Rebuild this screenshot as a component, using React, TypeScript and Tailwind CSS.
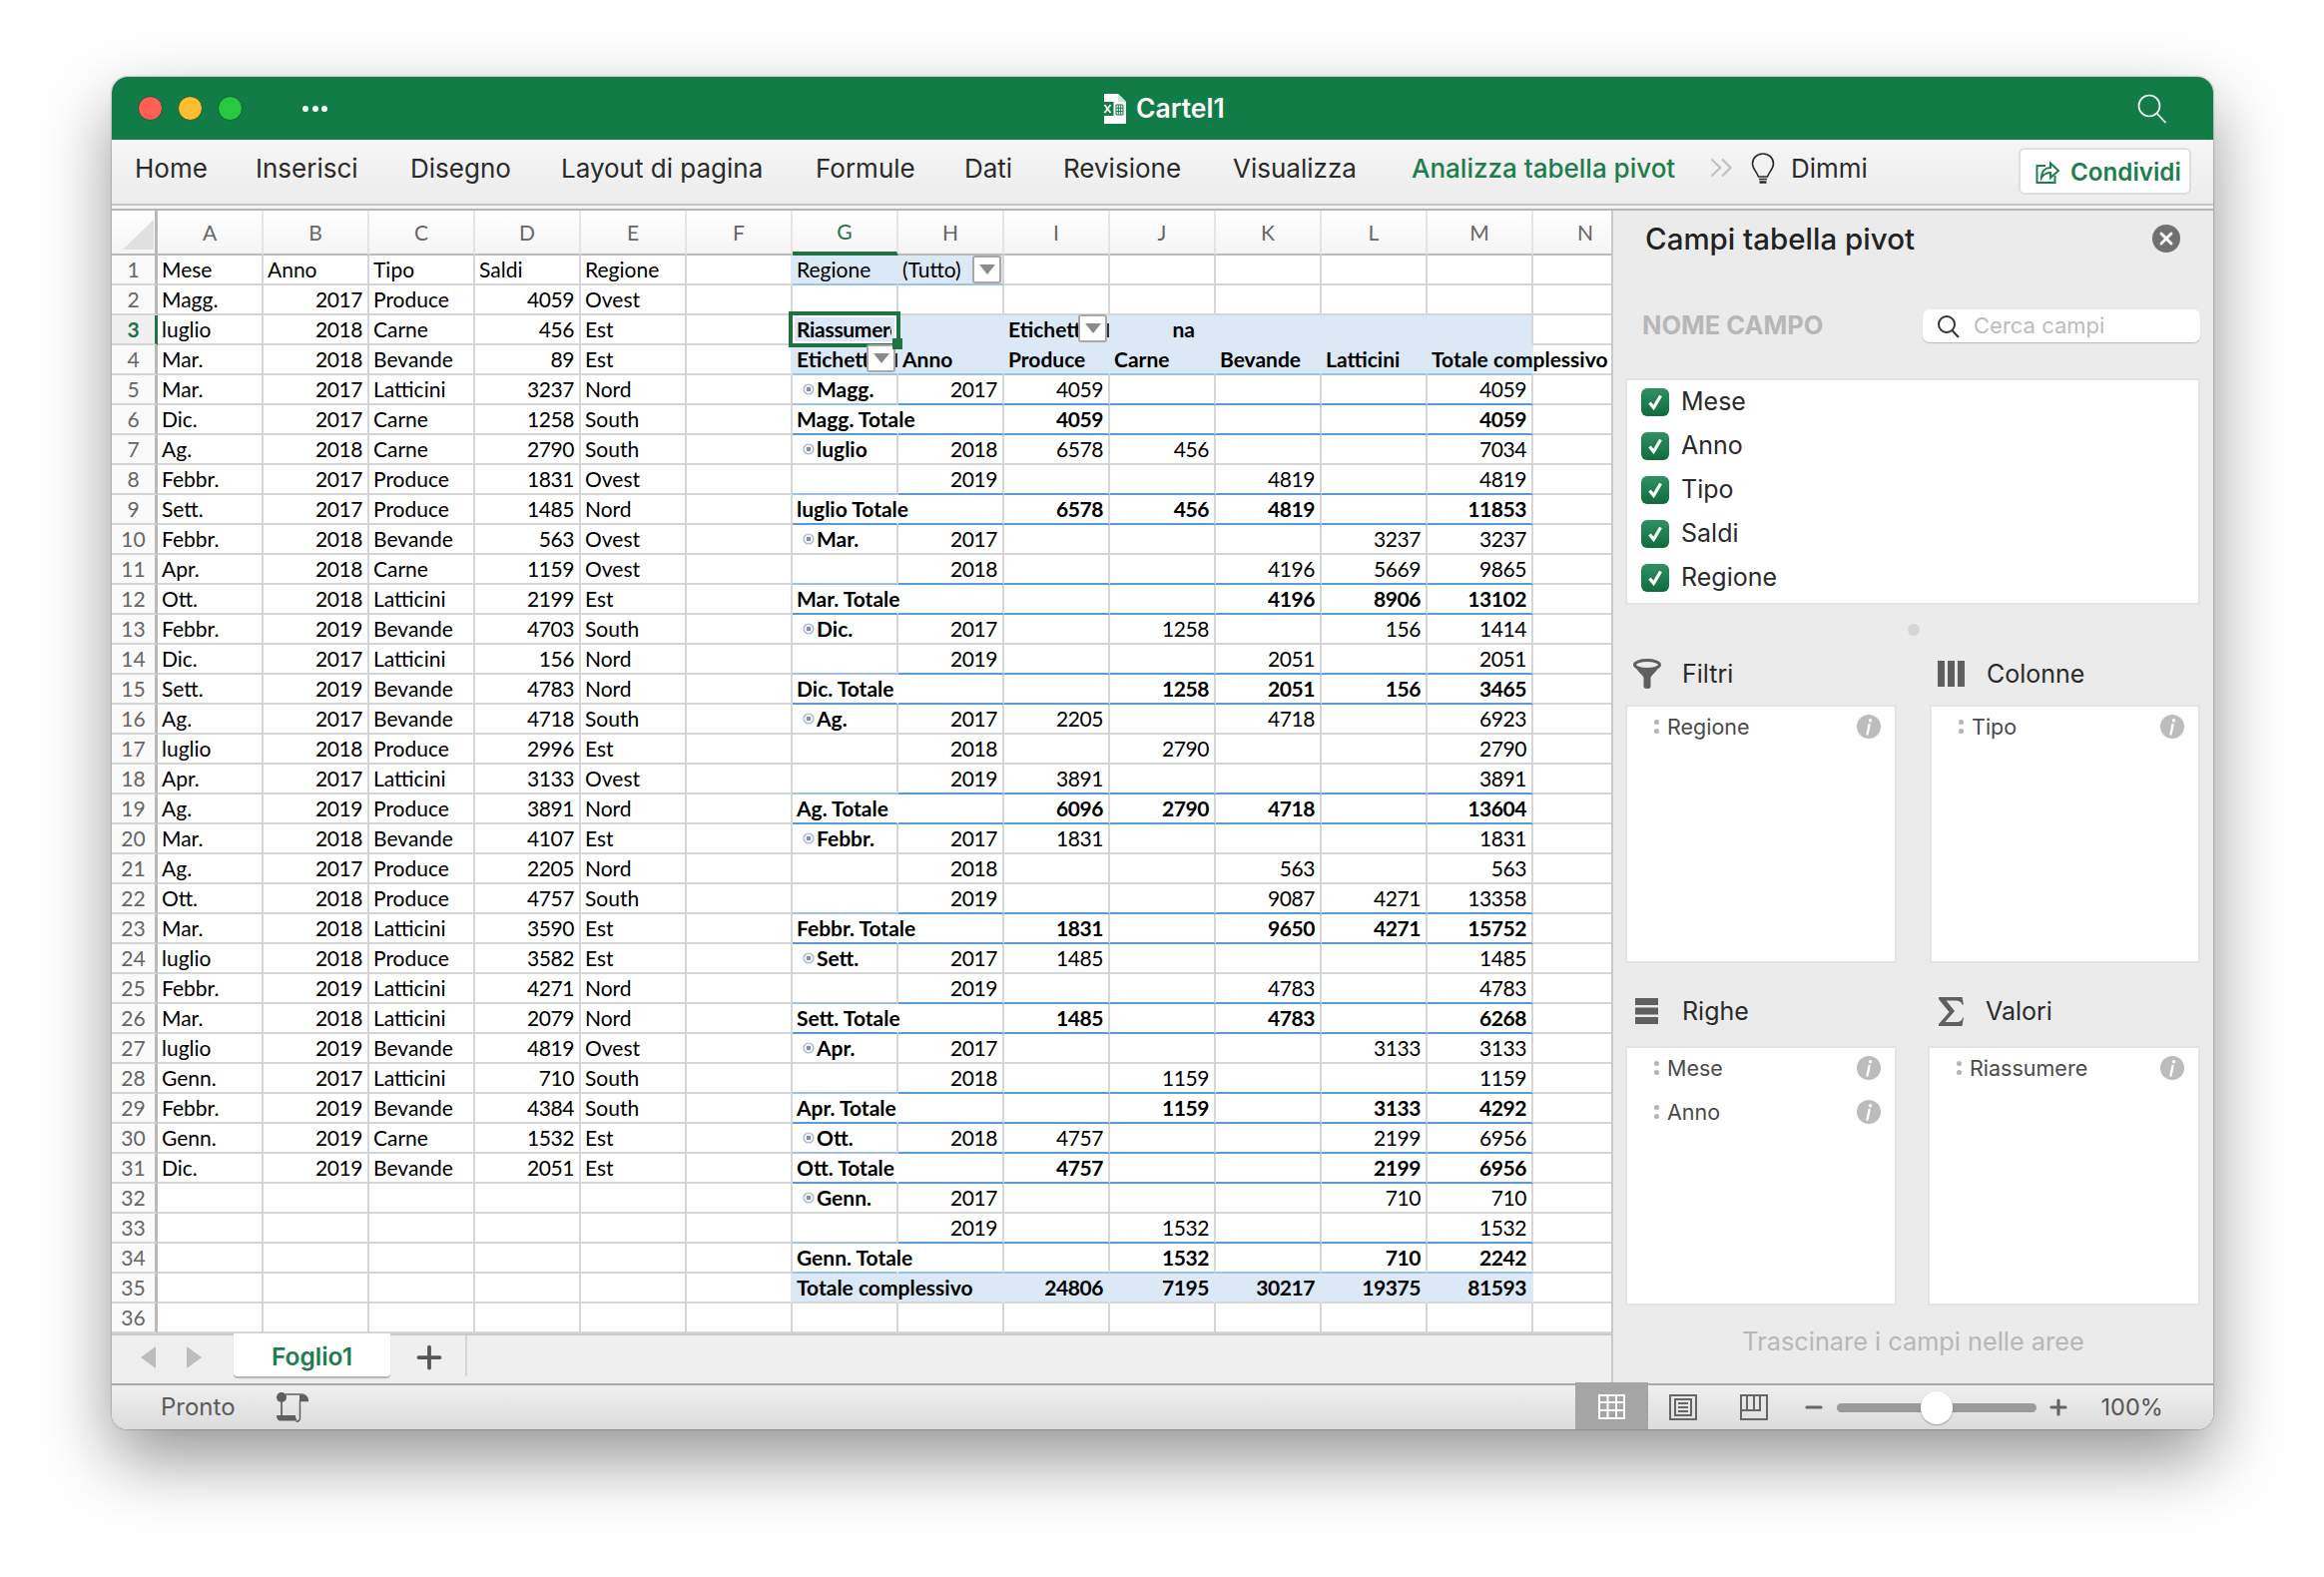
// Excel for Mac window with a pivot table and the pivot field panel.
import { Plus, Minus, X } from 'lucide-react'

const COL_LETTERS = ['A', 'B', 'C', 'D', 'E', 'F', 'G', 'H', 'I', 'J', 'K', 'L', 'M', 'N']

const SHEET: [string, number, string, number, string][] = [
  ['Magg.', 2017, 'Produce', 4059, 'Ovest'],
  ['luglio', 2018, 'Carne', 456, 'Est'],
  ['Mar.', 2018, 'Bevande', 89, 'Est'],
  ['Mar.', 2017, 'Latticini', 3237, 'Nord'],
  ['Dic.', 2017, 'Carne', 1258, 'South'],
  ['Ag.', 2018, 'Carne', 2790, 'South'],
  ['Febbr.', 2017, 'Produce', 1831, 'Ovest'],
  ['Sett.', 2017, 'Produce', 1485, 'Nord'],
  ['Febbr.', 2018, 'Bevande', 563, 'Ovest'],
  ['Apr.', 2018, 'Carne', 1159, 'Ovest'],
  ['Ott.', 2018, 'Latticini', 2199, 'Est'],
  ['Febbr.', 2019, 'Bevande', 4703, 'South'],
  ['Dic.', 2017, 'Latticini', 156, 'Nord'],
  ['Sett.', 2019, 'Bevande', 4783, 'Nord'],
  ['Ag.', 2017, 'Bevande', 4718, 'South'],
  ['luglio', 2018, 'Produce', 2996, 'Est'],
  ['Apr.', 2017, 'Latticini', 3133, 'Ovest'],
  ['Ag.', 2019, 'Produce', 3891, 'Nord'],
  ['Mar.', 2018, 'Bevande', 4107, 'Est'],
  ['Ag.', 2017, 'Produce', 2205, 'Nord'],
  ['Ott.', 2018, 'Produce', 4757, 'South'],
  ['Mar.', 2018, 'Latticini', 3590, 'Est'],
  ['luglio', 2018, 'Produce', 3582, 'Est'],
  ['Febbr.', 2019, 'Latticini', 4271, 'Nord'],
  ['Mar.', 2018, 'Latticini', 2079, 'Nord'],
  ['luglio', 2019, 'Bevande', 4819, 'Ovest'],
  ['Genn.', 2017, 'Latticini', 710, 'South'],
  ['Febbr.', 2019, 'Bevande', 4384, 'South'],
  ['Genn.', 2019, 'Carne', 1532, 'Est'],
  ['Dic.', 2019, 'Bevande', 2051, 'Est'],
]

// Pivot rows 5..35: label, year, Produce, Carne, Bevande, Latticini, total
type PivotRow = [string, string, string, string, string, string, string]
const PIVOT: PivotRow[] = [
  ['Magg.', '2017', '4059', '', '', '', '4059'],
  ['Magg. Totale', '', '4059', '', '', '', '4059'],
  ['luglio', '2018', '6578', '456', '', '', '7034'],
  ['', '2019', '', '', '4819', '', '4819'],
  ['luglio Totale', '', '6578', '456', '4819', '', '11853'],
  ['Mar.', '2017', '', '', '', '3237', '3237'],
  ['', '2018', '', '', '4196', '5669', '9865'],
  ['Mar. Totale', '', '', '', '4196', '8906', '13102'],
  ['Dic.', '2017', '', '1258', '', '156', '1414'],
  ['', '2019', '', '', '2051', '', '2051'],
  ['Dic. Totale', '', '', '1258', '2051', '156', '3465'],
  ['Ag.', '2017', '2205', '', '4718', '', '6923'],
  ['', '2018', '', '2790', '', '', '2790'],
  ['', '2019', '3891', '', '', '', '3891'],
  ['Ag. Totale', '', '6096', '2790', '4718', '', '13604'],
  ['Febbr.', '2017', '1831', '', '', '', '1831'],
  ['', '2018', '', '', '563', '', '563'],
  ['', '2019', '', '', '9087', '4271', '13358'],
  ['Febbr. Totale', '', '1831', '', '9650', '4271', '15752'],
  ['Sett.', '2017', '1485', '', '', '', '1485'],
  ['', '2019', '', '', '4783', '', '4783'],
  ['Sett. Totale', '', '1485', '', '4783', '', '6268'],
  ['Apr.', '2017', '', '', '', '3133', '3133'],
  ['', '2018', '', '1159', '', '', '1159'],
  ['Apr. Totale', '', '', '1159', '', '3133', '4292'],
  ['Ott.', '2018', '4757', '', '', '2199', '6956'],
  ['Ott. Totale', '', '4757', '', '', '2199', '6956'],
  ['Genn.', '2017', '', '', '', '710', '710'],
  ['', '2019', '', '1532', '', '', '1532'],
  ['Genn. Totale', '', '', '1532', '', '710', '2242'],
  ['Totale complessivo', '', '24806', '7195', '30217', '19375', '81593'],
]

const isTotal = (s: string) => s.endsWith('Totale')

const cellBase =
  'relative flex h-full w-[106px] shrink-0 items-center whitespace-nowrap border-r-2 border-b-2 border-[#d6d6d6] pr-[5px] pl-[4px]'

function Cell({ children, right, className = '' }: { children?: React.ReactNode; right?: boolean; className?: string }) {
  return <div className={cellBase + (right ? ' justify-end tracking-[-0.45px] ' : ' ') + className}>{children}</div>
}

function DropBtn({ className = '' }: { className?: string }) {
  return (
    <div
      className={
        'absolute z-10 flex h-[28px] w-[29px] items-center justify-center rounded-[3px] border-2 border-[#a9a9a9] bg-white ' +
        className
      }
    >
      <div className="h-0 w-0 border-x-[8px] border-t-[10px] border-x-transparent border-t-[#8a8a8a]" />
    </div>
  )
}

function ExpandIcon() {
  return (
    <svg width="12" height="12" viewBox="0 0 12 12" className="mr-[2px] ml-[6px] shrink-0">
      <circle cx="6" cy="6" r="5" fill="#eef2f6" stroke="#a9b4c0" strokeWidth="1.2" />
      <rect x="4" y="4" width="4" height="4" fill="#7f8ea0" />
    </svg>
  )
}

function RowHead({ n }: { n: number }) {
  const active = n === 3
  return (
    <div
      className={
        'flex h-full w-[46px] shrink-0 items-center justify-center border-b-2 border-[#d6d6d6] text-[21px] ' +
        (active
          ? 'border-r-[3px] border-r-[#1f7246] bg-[#f0f0f0] font-bold text-[#1f7246]'
          : 'border-r-[3px] border-r-[#b9b9b9] bg-[#fafafa] text-[#666666]')
      }
    >
      {n}
    </div>
  )
}

function PivotCells({ row, r }: { row: number; r: PivotRow }) {
  const grand = row === 35
  const total = isTotal(r[0])
  const nextTotal = !total && !grand && isTotal(PIVOT[row - 4]?.[0] ?? '')
  const bold = total || grand ? ' font-bold' : ''
  const line = grand
    ? ' border-[#dbe8f6] border-b-[#d6d6d6] bg-[#dbe8f6]'
    : row === 34
      ? ' border-b-[#9cc2e5]'
      : total || nextTotal
        ? ' border-b-[#5b9bd5]'
        : ''
  const gLine = grand ? line : nextTotal ? ' border-b-[#9cc2e5]' : line
  const open = total || grand ? ' z-[1] border-r-transparent' : ''
  return (
    <>
      <Cell className={gLine + open + ' font-bold'}>
        {r[0] && !total && !grand && <ExpandIcon />}
        {r[0]}
      </Cell>
      {r.slice(1).map((v, i) => (
        <Cell key={i} right className={line + bold}>
          {v}
        </Cell>
      ))}
    </>
  )
}

function Blank({ count }: { count: number }) {
  return (
    <>
      {Array.from({ length: count }, (_, i) => (
        <Cell key={i} />
      ))}
    </>
  )
}

function SheetRow({ n }: { n: number }) {
  const src = n >= 2 && n <= 31 ? SHEET[n - 2] : null
  const pivotEdge = n === 1 || n === 3 || n === 4 || n === 35
  const head = 'border-r-[#dbe8f6] border-b-[#9cc2e5] bg-[#dbe8f6]'
  const band = 'border-transparent bg-[#dbe8f6]'
  return (
    <div className="flex h-[30px]">
      <RowHead n={n} />
      {n === 1 ? (
        <>
          <Cell>Mese</Cell>
          <Cell>Anno</Cell>
          <Cell>Tipo</Cell>
          <Cell>Saldi</Cell>
          <Cell>Regione</Cell>
        </>
      ) : src ? (
        <>
          <Cell>{src[0]}</Cell>
          <Cell right>{src[1]}</Cell>
          <Cell>{src[2]}</Cell>
          <Cell right>{src[3]}</Cell>
          <Cell>{src[4]}</Cell>
        </>
      ) : (
        <Blank count={5} />
      )}
      <Cell className={pivotEdge ? 'border-r-[#dbe8f6]' : ''} />
      {n === 1 && (
        <>
          <Cell className={head}>Regione</Cell>
          <Cell className="border-b-[#9cc2e5] bg-[#dbe8f6]">
            (Tutto)
            <DropBtn className="top-0 right-[1px]" />
          </Cell>
          <Blank count={5} />
        </>
      )}
      {n === 2 && <Blank count={7} />}
      {n === 3 && (
        <>
          <Cell className={band + ' font-bold'}>
            <span className="w-full overflow-hidden tracking-[-0.3px]">Riassumere</span>
            <div className="absolute -top-[4px] -right-[4px] -bottom-[4px] -left-[4px] z-10 border-[4px] border-[#1f7246] shadow-[inset_0_0_0_2px_#ffffff]" />
            <div className="absolute top-[23px] left-[100px] z-20 h-[11px] w-[10px] bg-[#1f7246]" />
          </Cell>
          <Cell className={band} />
          <Cell className={band + ' font-bold'}>
            Etichett
            <DropBtn className="-top-[1px] right-[1px]" />
            <span className="absolute top-[8px] -right-[1px] h-[14px] w-[2px] bg-[#333333]" />
          </Cell>
          <Cell className={band + ' justify-end pr-[19px] font-bold'}>na</Cell>
          <Cell className={band} />
          <Cell className={band} />
          <Cell className={band + ' border-r-[#d6d6d6]'} />
        </>
      )}
      {n === 4 && (
        <>
          <Cell className={head + ' font-bold'}>
            Etichett
            <DropBtn className="-top-[1px] right-[1px]" />
            <span className="absolute top-[8px] -right-[1px] h-[14px] w-[2px] bg-[#333333]" />
          </Cell>
          {['Anno', 'Produce', 'Carne', 'Bevande', 'Latticini', 'Totale complessivo'].map((h) => (
            <Cell key={h} className={head + ' font-bold'}>
              {h}
            </Cell>
          ))}
        </>
      )}
      {n >= 5 && n <= 35 && <PivotCells row={n} r={PIVOT[n - 5]} />}
      {n === 36 && <Blank count={7} />}
      <div className="h-full w-[106px] shrink-0 border-b-2 border-[#d6d6d6]" />
    </div>
  )
}

function ColHeader() {
  return (
    <div className="flex h-[45px] bg-gradient-to-b from-[#ffffff] to-[#f4f4f4]">
      <div className="flex w-[46px] shrink-0 items-end justify-end border-r-[3px] border-b-2 border-[#b9b9b9] pr-[1px] pb-[4px]">
        <svg width="31" height="30" viewBox="0 0 31 30">
          <path d="M31 0v30H0z" fill="#e0e0e0" />
        </svg>
      </div>
      {COL_LETTERS.map((c) => {
        const active = c === 'G'
        return (
          <div
            key={c}
            className={
              'flex w-[106px] shrink-0 items-center justify-center border-r-2 border-[#e4e4e4] text-[21px] ' +
              (active
                ? 'border-b-[4px] border-b-[#1f7246] text-[#1f7246]'
                : 'border-b-2 border-b-[#b9b9b9] text-[#666666]')
            }
          >
            {c}
          </div>
        )
      })}
    </div>
  )
}

function ExcelDoc() {
  return (
    <svg width="24" height="30" viewBox="0 0 24 30">
      <path d="M2 0h14l8 8v22H2z" fill="#ffffff" />
      <path d="M16 0v8h8z" fill="#cfe3d8" />
      <rect x="0" y="8" width="11.500" height="14" fill="#127c46" />
      <path d="M2.500 11l6 8M8.500 11l-6 8" stroke="#ffffff" strokeWidth="1.800" />
      <path d="M14 11h7v10h-7zM16.300 11v10M18.700 11v10M14 14.300h7M14 17.600h7" fill="none" stroke="#127c46" strokeWidth="1" />
    </svg>
  )
}

function TitleBar() {
  return (
    <div className="relative flex h-[63px] shrink-0 items-center bg-[#127c46] pr-[46px] pl-[26px]">
      <div className="flex items-center gap-[15px]">
        <span className="h-[25px] w-[25px] rounded-full border border-[#0f5f36] bg-[#ff5f57]" />
        <span className="h-[25px] w-[25px] rounded-full border border-[#0f5f36] bg-[#febc2e]" />
        <span className="h-[25px] w-[25px] rounded-full border border-[#0f5f36] bg-[#28c840]" />
      </div>
      <div className="ml-[60px] flex items-center gap-[3.500px]">
        <span className="h-[6px] w-[6px] rounded-full bg-white" />
        <span className="h-[6px] w-[6px] rounded-full bg-white" />
        <span className="h-[6px] w-[6px] rounded-full bg-white" />
      </div>
      <div className="ml-[776px] flex items-center gap-[10px]">
        <ExcelDoc />
        <span className="text-[26.500px] font-semibold text-white">Cartel1</span>
      </div>
      <svg width="30" height="30" viewBox="0 0 30 30" fill="none" stroke="#ffffff" strokeWidth="1.700" className="ml-auto">
        <circle cx="12" cy="12" r="10.500" />
        <path d="M19.500 19.500l9 9.500" />
      </svg>
    </div>
  )
}

function Ribbon() {
  const tab = 'text-[26px] text-[#2a2a2a]'
  return (
    <div className="flex h-[66px] shrink-0 items-center border-b-2 border-[#c4c4c4] bg-gradient-to-b from-[#f6f6f6] to-[#ececec] pb-[8px] pl-[23px]">
      <span className={tab + ' w-[121px]'}>Home</span>
      <span className={tab + ' w-[155px]'}>Inserisci</span>
      <span className={tab + ' w-[151px]'}>Disegno</span>
      <span className={tab + ' w-[255px]'}>Layout di pagina</span>
      <span className={tab + ' w-[149px]'}>Formule</span>
      <span className={tab + ' w-[99px]'}>Dati</span>
      <span className={tab + ' w-[170px]'}>Revisione</span>
      <span className={tab + ' w-[179px]'}>Visualizza</span>
      <span className="w-[299px] text-[26px] font-medium text-[#1e7d4d]">Analizza tabella pivot</span>
      <svg width="23" height="20" viewBox="0 0 23 20" fill="none" stroke="#c2c2c2" strokeWidth="2.400">
        <path d="M1.500 1.500L10 10l-8.500 8.500M12 1.500L20.500 10 12 18.500" />
      </svg>
      <svg width="24" height="31" viewBox="0 0 24 31" fill="none" stroke="#2a2a2a" strokeWidth="1.600" className="ml-[18px]">
        <path d="M12 1C6 1 1.500 5.500 1.500 11c0 5 4 7.500 6 13h9c2-5.500 6-8 6-13C22.500 5.500 18 1 12 1z" />
        <path d="M8 26.500h8" />
        <path d="M8.500 29.500h7" strokeWidth="2.400" />
      </svg>
      <span className={tab + ' ml-[16px]'}>Dimmi</span>
      <div className="mt-[7px] mr-[22px] ml-auto flex h-[47px] w-[173px] items-center gap-[10px] rounded-[6px] border-2 border-[#dedede] bg-white pl-[15px]">
        <svg width="25" height="27" viewBox="0 0 25 27" fill="none" stroke="#1e7d4d" strokeWidth="2">
          <path d="M10 8H1.500v17h18v-7" />
          <path d="M6 20c0-7 4-10 9-10V5.500l8 7.500-8 7v-5c-4 0-7 1.500-9 5z" />
        </svg>
        <span className="pt-[3px] text-[24.200px] font-semibold text-[#1e7d4d]">Condividi</span>
      </div>
    </div>
  )
}

function SheetTabs() {
  return (
    <div className="relative flex h-[50px] shrink-0 items-start border-t-2 border-[#c9c9c9] bg-[#efefef] text-[24.500px]">
      <div className="mt-[11px] ml-[29px] h-0 w-0 border-y-[11px] border-r-[15px] border-y-transparent border-r-[#bdbdbd]" />
      <div className="mt-[11px] ml-[31px] h-0 w-0 border-y-[11px] border-l-[15px] border-y-transparent border-l-[#bdbdbd]" />
      <div className="-mt-[2px] ml-[32px] flex h-[43px] w-[157px] items-center justify-center rounded-b-[4px] bg-white pt-[4px] font-semibold text-[#1e7d4d] shadow-[0_2px_1px_#b5b5b5]">
        Foglio1
      </div>
      <Plus size={36} strokeWidth={2.500} className="mt-[4px] ml-[21px] text-[#555555]" />
      <div className="ml-[18px] h-[41px] w-[2px] bg-[#d6d6d6]" />
    </div>
  )
}

function MacroIcon() {
  return (
    <svg width="32" height="30" viewBox="0 0 32 30" fill="#5f5f5f">
      <circle cx="5" cy="5" r="5" />
      <rect x="4.200" y="9" width="1.700" height="14" />
      <path d="M0 23h19c0 3 1 4 2 5.500H4c-2.500 0-4-2-4-5.500z" />
      <path d="M9 2h15c4 0 7 2 7.500 6.500h-8V25c0 3-2 4.500-4 4.500" fill="none" stroke="#5f5f5f" strokeWidth="1.500" />
      <path d="M23 2.500h1c4 0 7 2 7.500 6.500H23z" />
    </svg>
  )
}

function StatusBar() {
  return (
    <div className="relative flex h-[46px] shrink-0 items-center border-t-2 border-[#a9a9a9] bg-gradient-to-b from-[#efefef] to-[#dcdcdc]">
      <span className="ml-[49px] text-[24px] text-[#5b5b5b]">Pronto</span>
      <div className="ml-[41px]">
        <MacroIcon />
      </div>
      <div className="mb-[-2px] ml-[1269px] flex h-[48px] w-[73px] -translate-y-[1px] items-center justify-center self-end bg-[#a5a5a5]">
        <svg width="27" height="25" viewBox="0 0 27 25" fill="#ffffff">
          <path d="M0 0h27v25H0zM2 2v5h6.500V2zm8.500 0v5H17V2zM19 2v5h6V2zM2 9v6h6.500V9zm8.500 0v6H17V9zM19 9v6h6V9zM2 17v6h6.500v-6zm8.500 0v6H17v-6zM19 17v6h6v-6z" fillRule="evenodd" />
        </svg>
      </div>
      <svg width="28" height="26" viewBox="0 0 28 26" fill="none" stroke="#666666" strokeWidth="2" className="ml-[21px]">
        <rect x="1" y="1" width="26" height="24" />
        <rect x="6" y="5" width="16" height="16" />
        <path d="M9 9h10M9 13h10M9 17h10" />
      </svg>
      <svg width="28" height="26" viewBox="0 0 28 26" fill="none" stroke="#666666" strokeWidth="2" className="ml-[43px]">
        <rect x="1" y="1" width="26" height="24" />
        <path d="M1 16h19V1M7 1v15M14 1v15" />
      </svg>
      <Minus size={24} strokeWidth={3.200} className="ml-[34px] text-[#666666]" />
      <div className="relative ml-[11px] h-[9px] w-[200px] rounded-full bg-[#9a9a9a]">
        <div className="absolute -top-[12px] left-[84px] h-[33px] w-[32px] rounded-full bg-white shadow-[0_1px_2px_rgba(0,0,0,.3)]" />
      </div>
      <Plus size={24} strokeWidth={3.200} className="ml-[10px] text-[#666666]" />
      <span className="ml-[31px] text-[23.500px] text-[#555555]">100%</span>
    </div>
  )
}

function InfoIcon() {
  return (
    <svg width="24" height="24" viewBox="0 0 24 24" className="shrink-0">
      <circle cx="12" cy="12" r="12" fill="#bcbcbc" />
      <circle cx="13.500" cy="5.800" r="1.800" fill="#ffffff" />
      <path d="M12.500 10l-2 9.500" stroke="#ffffff" strokeWidth="2.400" strokeLinecap="round" />
    </svg>
  )
}

function DropItem({ label }: { label: string }) {
  return (
    <div className="relative -top-[2px] flex h-[44px] items-center pr-[14px] pl-[27px]">
      <div className="mr-[8px] flex flex-col gap-[4px]">
        <span className="h-[5px] w-[5px] rounded-full bg-[#b4b4b4]" />
        <span className="h-[5px] w-[5px] rounded-full bg-[#b4b4b4]" />
      </div>
      <span className="text-[21.500px] text-[#4a4a4a]">{label}</span>
      <div className="ml-auto">
        <InfoIcon />
      </div>
    </div>
  )
}

function DropBox({ items, className }: { items: string[]; className: string }) {
  return (
    <div className={'border-2 border-[#e4e4e4] bg-white ' + className}>
      {items.map((it) => (
        <DropItem key={it} label={it} />
      ))}
    </div>
  )
}

function SectionHead({ icon, label, iconClass, labelClass }: { icon: React.ReactNode; label: string; iconClass: string; labelClass: string }) {
  return (
    <div className="flex h-[42px] items-center">
      <div className={'flex justify-center ' + iconClass}>{icon}</div>
      <span className={'pt-[2px] text-[25px] text-[#2a2a2a] ' + labelClass}>{label}</span>
    </div>
  )
}

function PivotPanel() {
  return (
    <div className="flex min-w-0 flex-1 flex-col border-l-2 border-[#c9c9c9] bg-[#ebebeb]">
      <div className="flex h-[56px] shrink-0 items-center justify-between pr-[33px] pl-[32px]">
        <span className="text-[29.500px] font-medium text-[#222222]">Campi tabella pivot</span>
        <div className="flex h-[28px] w-[28px] items-center justify-center rounded-full bg-[#707070]">
          <X size={20} strokeWidth={3.500} className="text-white" />
        </div>
      </div>
      <div className="mt-[43px] flex h-[33px] shrink-0 items-center justify-between pr-[13px] pl-[29px]">
        <span className="text-[25.500px] font-bold text-[#b7b7b7]">NOME CAMPO</span>
        <div className="flex h-[33px] w-[278px] items-center rounded-[7px] bg-white pl-[14px] shadow-[0_1px_1px_#b9b9b9]">
          <svg width="24" height="24" viewBox="0 0 24 24" fill="none" stroke="#333333" strokeWidth="2">
            <circle cx="10" cy="10" r="8" />
            <path d="M15.500 16l6.500 7" />
          </svg>
          <span className="ml-[13px] text-[22px] text-[#bcbcbc]">Cerca campi</span>
        </div>
      </div>
      <div className="mt-[36px] mr-[13px] ml-[12px] h-[227px] shrink-0 border-2 border-[#e4e4e4] bg-white pl-[14px]">
        {['Mese', 'Anno', 'Tipo', 'Saldi', 'Regione'].map((f) => (
          <div key={f} className="flex h-[44px] items-center gap-[12px]">
            <div className="flex h-[28px] w-[28px] items-center justify-center rounded-[6px] bg-gradient-to-b from-[#2f9163] to-[#0f6b3c]">
              <svg width="18" height="18" viewBox="0 0 18 18" fill="none" stroke="#ffffff" strokeWidth="3.200">
                <path d="M3.500 9.500l4 5L14.500 2.500" />
              </svg>
            </div>
            <span className="text-[25px] text-[#2a2a2a]">{f}</span>
          </div>
        ))}
      </div>
      <div className="flex h-[48px] shrink-0 justify-center pt-[19px]">
        <span className="h-[12px] w-[12px] rounded-full bg-[#d6d6d6]" />
      </div>
      <div className="mr-[13px] ml-[12px] flex justify-between">
        <div className="w-[272px]">
          <SectionHead
            iconClass="ml-[8px] w-[28px]"
            labelClass="ml-[21px]"
            label="Filtri"
            icon={
              <svg width="28" height="30" viewBox="0 0 28 30">
                <ellipse cx="14" cy="6" rx="12.500" ry="4.500" fill="none" stroke="#5f5f5f" strokeWidth="3" />
                <path d="M1.500 7c3 6 8 9 9 12v9c0 1 1.500 2 3.500 2s3.500-1 3.500-2v-9c1-3 6-6 9-12-4 4-21 4-25 0z" fill="#5f5f5f" />
              </svg>
            }
          />
          <DropBox items={['Regione']} className="mt-[10px] h-[259px]" />
        </div>
        <div className="w-[271px]">
          <SectionHead
            iconClass="ml-[8px] w-[27px]"
            labelClass="ml-[22px]"
            label="Colonne"
            icon={
              <svg width="27" height="26" viewBox="0 0 27 26" fill="#5f5f5f">
                <rect width="7" height="26" />
                <rect x="10" width="7" height="26" />
                <rect x="20" width="7" height="26" />
              </svg>
            }
          />
          <DropBox items={['Tipo']} className="mt-[10px] h-[259px]" />
        </div>
      </div>
      <div className="mt-[27px] mr-[13px] ml-[12px] flex justify-between">
        <div className="w-[272px]">
          <SectionHead
            iconClass="ml-[10px] w-[23px]"
            labelClass="ml-[24px]"
            label="Righe"
            icon={
              <svg width="23" height="26" viewBox="0 0 23 26" fill="#5f5f5f">
                <rect width="23" height="7" />
                <rect y="9.500" width="23" height="7" />
                <rect y="19" width="23" height="7" />
              </svg>
            }
          />
          <DropBox items={['Mese', 'Anno']} className="mt-[14px] h-[260px]" />
        </div>
        <div className="w-[273px]">
          <SectionHead
            iconClass="ml-[11px] w-[25px]"
            labelClass="ml-[22px]"
            label="Valori"
            icon={
              <svg width="25" height="29" viewBox="0 0 25 29" fill="#5f5f5f">
                <path d="M0 0h23.500l1.500 7.500h-1.500C22.500 4.500 20.500 3.500 17 3.500H7.500l8.500 10.500L6.500 25H18c3 0 5-1 6-4.500h1L23.500 29H0v-2l10.500-12L0 2z" />
              </svg>
            }
          />
          <DropBox items={['Riassumere']} className="mt-[14px] h-[260px]" />
        </div>
      </div>
      <div className="flex h-[72px] shrink-0 items-center justify-center text-[25.300px] text-[#b7b7b7]">
        Trascinare i campi nelle aree
      </div>
    </div>
  )
}

export default function App() {
  const rows = Array.from({ length: 36 }, (_, i) => i + 1)
  return (
    <div className="h-[1580px] w-[2328px] overflow-hidden bg-white pt-[77px] pl-[112px] font-[Inter,sans-serif]">
      <div className="h-[1355px] w-[2105px] rounded-[16px] shadow-[0_30px_70px_rgba(0,0,0,.42),0_0_2px_rgba(0,0,0,.5)]">
        <div className="flex h-full flex-col overflow-hidden rounded-[16px] bg-white">
          <TitleBar />
          <Ribbon />
          <div className="h-[5px] shrink-0 border-b-2 border-[#b5b5b5] bg-[#f4f4f4]" />
          <div className="flex h-[1175px] shrink-0">
            <div className="flex w-[1502px] shrink-0 flex-col overflow-hidden">
              <div className="bg-white font-[Lato,sans-serif] text-[21px] text-black">
                <ColHeader />
                {rows.map((n) => (
                  <SheetRow key={n} n={n} />
                ))}
              </div>
              <SheetTabs />
            </div>
            <PivotPanel />
          </div>
          <StatusBar />
        </div>
      </div>
    </div>
  )
}
